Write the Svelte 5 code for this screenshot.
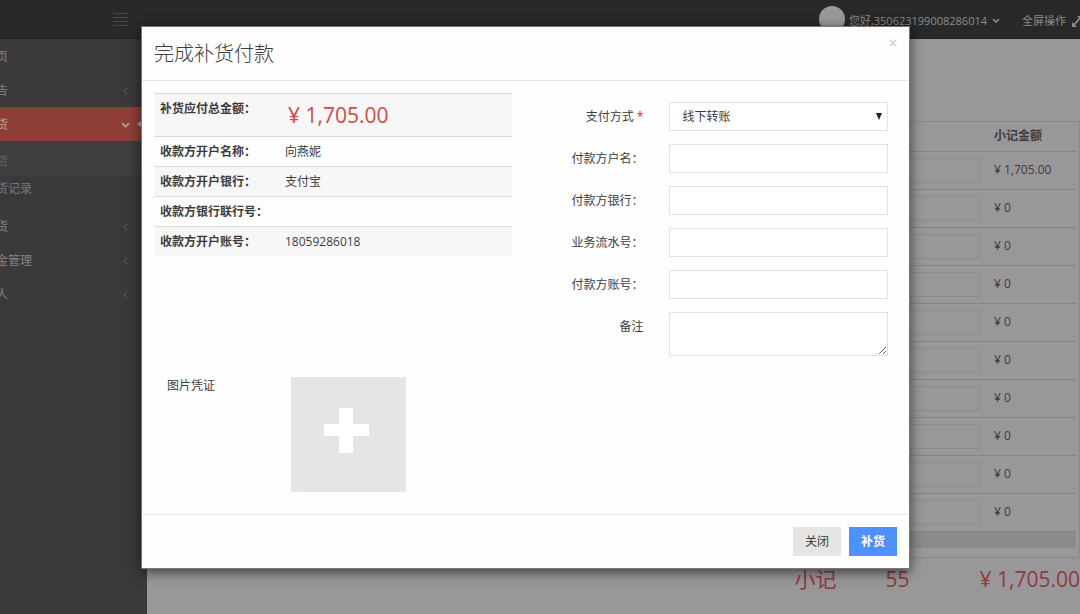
<script>
  const menu = [
    { label: '页' },
    { label: '告', arrow: true },
    { label: '货', arrow: true, active: true, children: ['货', '货记录'] },
    { label: '货', arrow: true },
    { label: '金管理', arrow: true },
    { label: '人', arrow: true },
  ];
  const amounts = ['¥ 1,705.00', '¥ 0', '¥ 0', '¥ 0', '¥ 0', '¥ 0', '¥ 0', '¥ 0', '¥ 0', '¥ 0'];
  const payee = [
    ['收款方开户名称：', '向燕妮'],
    ['收款方开户银行：', '支付宝'],
    ['收款方银行联行号：', ''],
    ['收款方开户账号：', '18059286018'],
  ];
  const fields = [
    ['payer', '付款方户名：'],
    ['bank', '付款方银行：'],
    ['serial', '业务流水号：'],
    ['account', '付款方账号：'],
  ];
</script>

<div class="page">
  <header class="topbar">
    <button class="burger" aria-label="菜单">
      <svg width="15" height="13" viewBox="0 0 15 13"><path d="M0 .5h15M0 4.5h15M0 8.5h15M0 12.5h15" stroke="currentColor" /></svg>
    </button>
    <div class="user">
      <span class="avatar"></span>
      <a href="#user">您好,350623199008286014</a>
      <svg class="down" width="8" height="6" viewBox="0 0 8 6"><path d="M1 1l3 3 3-3" fill="none" stroke="currentColor" stroke-width="1.6" /></svg>
      <a class="full" href="#full">全屏操作</a>
      <svg class="expand" width="10" height="11" viewBox="0 0 10 11"><path d="M5 0h5v5L8.200 3.300 6.200 5.300 5 4l2-2zM0 11V6l1.600 1.700L5.500 3.800 6.800 5 3 9l2 2z" fill="currentColor" /></svg>
    </div>
  </header>

  <div class="columns">
    <nav class="sidebar">
      {#each menu as item}
        <a class="item" class:active={item.active} href="#menu">
          <span>{item.label}</span>
          {#if item.active}
            <svg width="9" height="6" viewBox="0 0 9 6"><path d="M1 1l3.500 3.500L8 1" fill="none" stroke="currentColor" stroke-width="1.600" /></svg>
            <i class="notch"></i>
          {:else if item.arrow}
            <svg width="5" height="8" viewBox="0 0 5 8"><path d="M4 1L1 4l3 3" fill="none" stroke="currentColor" /></svg>
          {/if}
        </a>
        {#if item.children}
          <div class="sub">
            {#each item.children as child}
              <a href="#sub">{child}</a>
            {/each}
          </div>
        {/if}
      {/each}
    </nav>

    <main>
      <div class="list">
        <table>
          <thead>
            <tr><th></th><th></th><th>小记金额</th></tr>
          </thead>
          <tbody>
            {#each amounts as amount}
              <tr>
                <td></td>
                <td class="qty"><input type="text" aria-label="数量" /></td>
                <td>{amount}</td>
              </tr>
            {/each}
          </tbody>
        </table>
        <div class="hscroll"></div>
      </div>
      <div class="totals"><span>小记</span><span>55</span><span>¥ 1,705.00</span></div>
    </main>
  </div>

  <div class="overlay">
    <form class="modal" role="dialog" aria-labelledby="title">
      <div class="head">
        <h1 id="title">完成补货付款</h1>
        <button class="close" type="button" aria-label="关闭窗口">
          <svg width="8" height="8" viewBox="0 0 8 8"><path d="M1 1l6 6M7 1L1 7" stroke="currentColor" stroke-width="1.700" /></svg>
        </button>
      </div>
      <div class="body">
        <table class="payee">
          <tbody>
            <tr class="sum"><th>补货应付总金额：</th><td>¥ 1,705.00</td></tr>
            {#each payee as [name, value]}
              <tr><th>{name}</th><td>{value}</td></tr>
            {/each}
          </tbody>
        </table>
        <div class="form">
          <label for="method">支付方式 <b>*</b></label>
          <div class="select">
            <select id="method"><option>线下转账</option></select>
            <svg width="6" height="7" viewBox="0 0 6 7"><path d="M0 0h6L3 7z" fill="#222" /></svg>
          </div>
          {#each fields as [id, name]}
            <label for={id}>{name}</label>
            <input {id} type="text" />
          {/each}
          <label for="note">备注</label>
          <textarea id="note"></textarea>
        </div>
        <div class="proof">
          <span>图片凭证</span>
          <button type="button" aria-label="上传图片">
            <svg width="45" height="45" viewBox="0 0 45 45"><path d="M15 0h14v16h16v12H29v17H15V28H0V16h15z" fill="#fff" /></svg>
          </button>
        </div>
      </div>
      <div class="foot">
        <button class="btn" type="button">关闭</button>
        <button class="btn primary" type="button">补货</button>
      </div>
    </form>
  </div>
</div>

<style>
  :global(body) { background: #999799; }
  .page, .page :global(*) { box-sizing: border-box; }
  .page {
    position: relative;
    display: flex;
    flex-direction: column;
    min-height: 100vh;
    overflow: hidden;
    font: 12px/18px "Open Sans", "Noto Sans CJK SC", sans-serif;
    color: #3c3c3c;
  }
  a { color: inherit; text-decoration: none; }
  button, input, select, textarea { font: inherit; color: inherit; margin: 0; padding: 0; border-radius: 0; }
  button { border: 0; background: none; }
  svg { display: block; flex: none; }

  .topbar {
    display: flex;
    justify-content: space-between;
    height: 39px;
    padding-left: 113px;
    background: #292929;
    border-bottom: 1px solid #222;
    color: #8a8a8a;
  }
  .burger { align-self: center; color: #484848; }
  .user { display: flex; align-items: center; font-size: 11px; padding-top: 4px; }
  .avatar { width: 26px; height: 26px; margin: -4px 4px 0 0; border-radius: 50%; background: #999; }
  .down { margin: 0 22px 0 5px; }
  .full { margin-right: 6px; }
  .expand { margin-right: -2px; }

  .columns { display: flex; flex: 1; }
  .sidebar { flex: none; width: 147px; background: #3b393b; color: #858385; }
  .item {
    display: flex;
    align-items: center;
    justify-content: space-between;
    height: 34px;
    padding: 2px 19px 0 0;
    position: relative;
  }
  .item span, .sub a { margin-left: -4px; }
  .item svg { color: #636163; }
  .item.active { background: #8f3f38; color: #b5a3a1; padding-right: 17px; }
  .item.active svg { color: #b5a3a1; }
  .notch {
    position: absolute;
    right: 0;
    top: 9px;
    border: 8px solid transparent;
    border-right: 10px solid #aaa;
    border-left: 0;
  }
  .sub { padding: 7px 0; background: linear-gradient(#403e40 34px, #3b393b 34px); color: #656365; }
  .sub a { display: block; line-height: 27px; }
  .sub a + a { color: #7b797b; }

  main { flex: 1; min-width: 0; padding-top: 82px; background: #999799; }
  .list { border: 1px solid #8b898b; border-left: 0; padding-right: 3px; }
  .list table { width: 100%; border-collapse: collapse; table-layout: fixed; }
  .list th, .list td { height: 38px; padding: 0 0 0 8px; border-bottom: 1px solid #858385; text-align: left; }
  .list th { height: 29px; font-weight: 600; }
  .list th:nth-child(2) { width: 110px; }
  .list th:nth-child(3) { width: 90px; }
  .qty input { display: block; width: 96px; height: 25px; border: 1px solid #8d8b8d; background: transparent; }
  .hscroll { height: 16px; margin-bottom: 9px; background: #8c8a8c; }
  .totals {
    display: grid;
    grid-template-columns: 91px 94px auto;
    justify-content: end;
    padding: 6px 0;
    font-size: 21px;
    line-height: 30px;
    color: #8c3b40;
  }

  .overlay { position: absolute; inset: 0; padding: 26px 170px 45px 141px; }
  .modal { background: #fefefe; border: 1px solid #777; box-shadow: 0 3px 12px rgba(0, 0, 0, 0.6); }
  .head { display: flex; justify-content: space-between; align-items: flex-start; padding: 12px; border-bottom: 1px solid #e7e5e7; }
  h1 { margin: 0; font-size: 20px; line-height: 29px; font-weight: 300; }
  .close { color: #d2d2d2; }
  .body {
    display: grid;
    grid-template-columns: minmax(0, 358fr) minmax(0, 384fr);
    align-items: start;
    row-gap: 21px;
    padding: 12px 12px 22px;
  }
  .payee { border-collapse: collapse; width: 100%; }
  .payee th, .payee td { padding: 6px 6px 5px; border-top: 1px solid #dcdadc; text-align: left; vertical-align: top; }
  .payee th { width: 125px; font-weight: 600; white-space: nowrap; }
  .payee tr:nth-child(odd) { background: #f8f7f8; }
  .payee .sum td { padding-left: 9px; font-size: 21px; line-height: 31px; color: #cf4a48; }

  .form {
    display: grid;
    grid-template-columns: 131px minmax(0, 1fr);
    column-gap: 26px;
    row-gap: 13px;
    padding: 9px 9px 0 0;
  }
  .form label { padding-top: 6px; text-align: right; }
  .form b { font-weight: normal; color: #e02222; }
  .form input, .form select, .form textarea {
    display: block;
    width: 100%;
    height: 29px;
    border: 1px solid #e3dfe3;
    background: #fff;
    outline: 0;
  }
  .form textarea { height: 44px; }
  .form select { appearance: none; padding: 0 12px; }
  .select { position: relative; }
  .select svg { position: absolute; right: 6px; top: 11px; pointer-events: none; }

  .proof { grid-column: 1 / -1; display: flex; }
  .proof span { width: 137px; padding-left: 13px; }
  .proof button { display: grid; place-items: center; width: 115px; height: 115px; padding: 0 5px 8px 0; background: #e6e4e7; }

  .foot { display: flex; justify-content: flex-end; gap: 8px; padding: 12px; border-top: 1px solid #e7e5e7; }
  .btn { width: 48px; height: 29px; background: #e5e5e5; }
  .primary { background: #4d90fe; color: #fff; font-weight: 600; }
</style>
